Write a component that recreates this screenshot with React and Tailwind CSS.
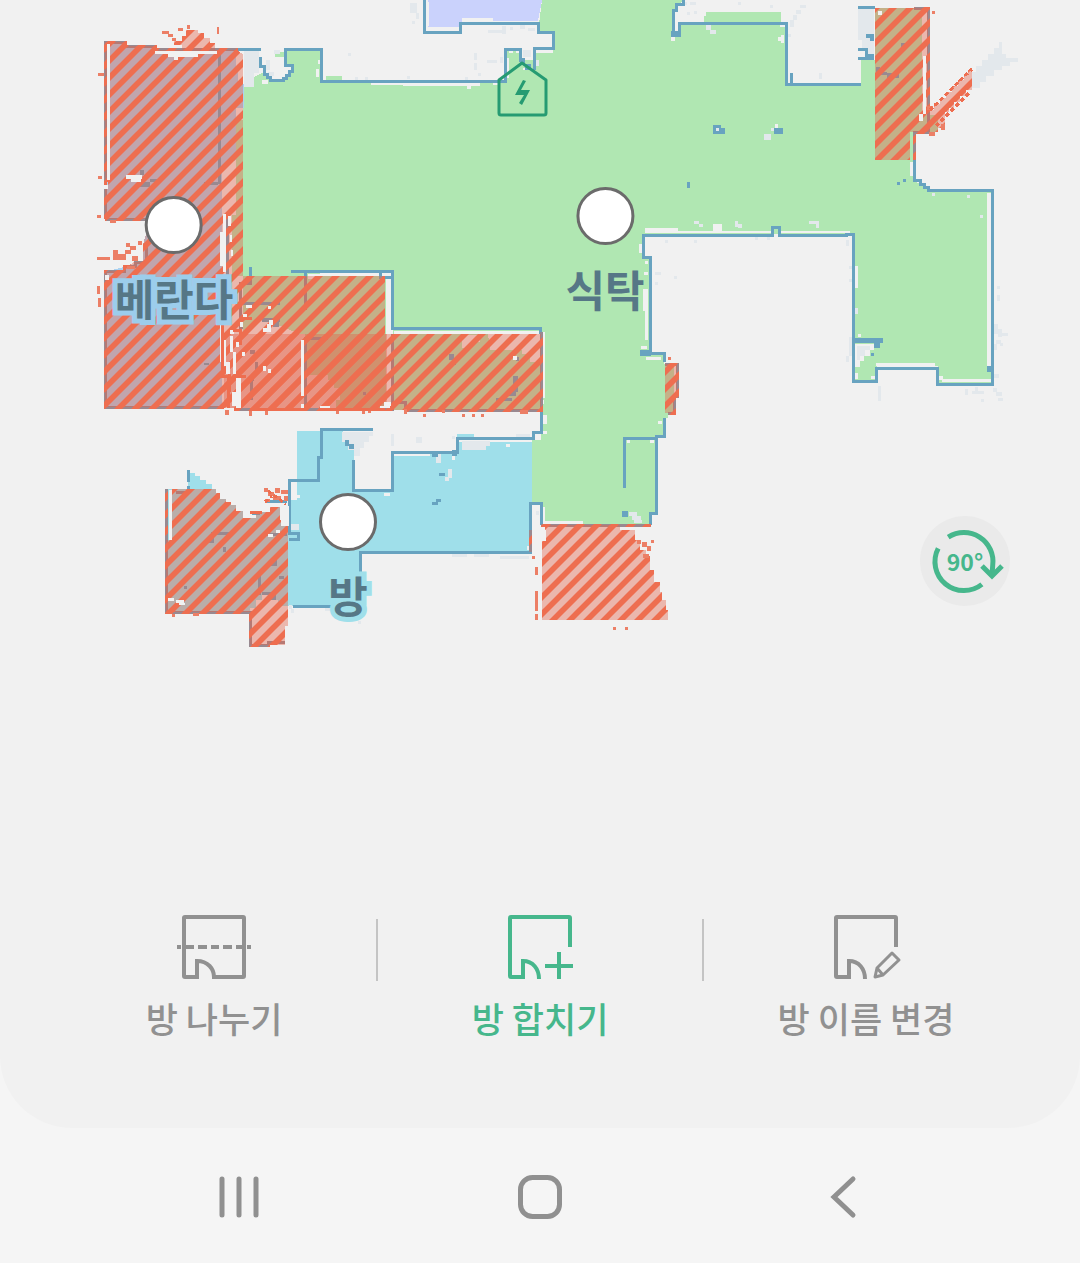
import React, { useState } from "react";

const MAP_WIDTH = 1080;
const MAP_HEIGHT = 880;

const rooms = [
  {
    id: "veranda",
    name: "베란다",
    x: 174,
    y: 225,
    halo: "[-webkit-text-stroke:10px_#9ccdec] [paint-order:stroke_fill]",
  },
  { id: "dining", name: "식탁", x: 605, y: 216, halo: "" },
  {
    id: "room",
    name: "방",
    x: 348,
    y: 522,
    halo: "[-webkit-text-stroke:10px_#9fdfea] [paint-order:stroke_fill]",
  },
];

// [x, y, width, height] of loose cells the sensor left on the map
const dust = [
  [244, 51, 15, 22], [244, 73, 10, 14], [274, 50, 6, 4], [266, 60, 4, 10], [268, 72, 6, 4], [348, 53, 3, 3],
  [355, 77, 3, 3], [365, 77, 3, 3], [407, 76, 3, 3], [465, 77, 3, 3], [410, 3, 7, 10], [416, 13, 3, 6],
  [412, 21, 3, 3], [488, 30, 15, 3], [502, 26, 4, 8], [510, 27, 3, 3], [520, 24, 5, 5], [528, 28, 7, 3],
  [474, 53, 3, 7], [474, 63, 3, 7], [487, 60, 10, 3], [500, 57, 3, 6], [478, 73, 3, 3], [523, 50, 8, 7],
  [536, 60, 3, 6], [684, 2, 3, 3], [690, 2, 6, 3], [687, 12, 3, 3], [694, 11, 3, 3], [738, 2, 3, 3],
  [770, 5, 3, 3], [800, 5, 6, 3], [796, 10, 5, 4], [793, 15, 4, 5], [790, 20, 4, 7], [788, 34, 3, 3],
  [819, 73, 3, 6], [858, 8, 16, 32], [862, 40, 12, 8], [868, 48, 6, 12], [665, 240, 3, 3], [694, 240, 3, 3],
  [755, 237, 3, 3], [767, 237, 3, 3], [655, 272, 6, 3], [674, 276, 3, 3], [655, 282, 3, 3], [846, 240, 3, 6],
  [849, 266, 3, 3], [849, 279, 3, 3], [849, 337, 3, 19], [846, 356, 3, 6], [997, 286, 3, 3], [997, 295, 3, 6],
  [994, 324, 4, 10], [998, 329, 4, 8], [1002, 333, 6, 3], [996, 340, 5, 4], [993, 344, 4, 6], [1000, 343, 3, 3],
  [878, 386, 3, 15], [965, 389, 3, 6], [972, 391, 12, 3], [975, 387, 3, 4], [981, 399, 3, 3], [993, 374, 6, 4],
  [993, 388, 4, 4], [996, 392, 6, 4], [998, 398, 5, 3], [391, 434, 3, 12], [416, 437, 6, 6], [452, 436, 3, 3],
  [516, 434, 14, 3], [452, 554, 15, 3], [474, 554, 15, 3], [500, 556, 29, 3], [536, 511, 3, 4], [325, 608, 5, 3],
  [358, 621, 3, 3], [291, 609, 3, 4],
];

// Unscanned holes inside the rooms
const holes = [
  [371, 83, 32, 2], [403, 83, 77, 3], [467, 86, 4, 3], [493, 82, 5, 3], [505, 58, 4, 20], [509, 50, 4, 3],
  [516, 50, 3, 3], [523, 68, 4, 2], [535, 50, 18, 3], [316, 69, 3, 8], [318, 60, 2, 4], [262, 80, 6, 4],
  [671, 37, 4, 4], [780, 24, 5, 3], [778, 37, 6, 4], [781, 35, 3, 8], [775, 124, 3, 4],
  [645, 228, 33, 5], [678, 231, 94, 2], [780, 231, 70, 2], [713, 224, 9, 8],
  [910, 162, 3, 14], [987, 193, 4, 178],
  [855, 266, 3, 22], [858, 334, 3, 3], [876, 363, 12, 3], [880, 363, 55, 3], [939, 376, 4, 4],
  [942, 379, 49, 3], [855, 344, 19, 6], [855, 350, 15, 6], [855, 356, 9, 5], [855, 361, 5, 6], [855, 373, 3, 6],
  [871, 376, 4, 3], [639, 244, 3, 9], [645, 261, 3, 3], [644, 272, 4, 3], [643, 289, 5, 22], [645, 311, 3, 29],
  [641, 346, 6, 3], [646, 357, 15, 3], [541, 332, 4, 66], [541, 400, 3, 4], [541, 415, 6, 9], [541, 431, 6, 3],
  [658, 421, 4, 3], [627, 440, 3, 3], [650, 440, 4, 3], [541, 507, 4, 17], [545, 521, 38, 3],
  [387, 274, 4, 52], [308, 274, 12, 5], [320, 273, 66, 3], [394, 331, 145, 3],
  [506, 444, 4, 3], [393, 454, 33, 2], [452, 456, 3, 4],
  [384, 493, 6, 3], [527, 546, 3, 4], [291, 482, 6, 18], [297, 495, 3, 3], [427, 2, 2, 24],
];

// Same holes, but seen faintly by the sensor
const faintHoles = [
  [771, 128, 3, 3], [694, 221, 5, 3], [699, 224, 4, 3], [735, 221, 3, 6], [738, 224, 4, 4], [809, 221, 10, 3],
  [816, 224, 3, 4], [764, 134, 7, 6], [706, 25, 5, 5], [710, 30, 6, 4], [932, 193, 3, 3], [967, 195, 3, 3],
  [980, 215, 3, 3], [855, 308, 3, 6], [629, 512, 8, 4], [632, 516, 9, 4], [634, 520, 8, 3], [462, 441, 28, 5],
  [462, 446, 24, 4], [436, 454, 5, 9], [448, 469, 4, 9], [445, 477, 4, 4], [291, 524, 8, 6], [289, 605, 3, 4],
];

const specks = [
  [713, 125, 8, 9], [721, 128, 4, 6], [774, 128, 9, 6], [687, 182, 3, 6], [897, 182, 3, 3], [903, 179, 3, 3],
  [622, 511, 6, 6], [640, 350, 11, 6], [855, 338, 28, 5], [874, 343, 6, 5], [871, 353, 3, 3], [987, 366, 5, 6],
  [432, 453, 6, 4], [452, 450, 5, 6], [439, 473, 6, 3], [436, 499, 5, 3], [432, 502, 6, 3], [345, 440, 4, 6],
  [349, 444, 5, 5], [671, 31, 8, 6], [790, 73, 3, 10], [866, 34, 8, 4], [870, 38, 4, 3], [866, 54, 8, 6],
  [520, 58, 5, 6], [525, 64, 6, 6], [187, 470, 3, 12],
];

// Walls and marks that sit below the no-go layer
const coveredSpecks = [
  [140, 170, 4, 5], [138, 182, 12, 5], [150, 179, 8, 3], [204, 182, 14, 3], [218, 50, 3, 134], [226, 215, 3, 60],
  [262, 318, 18, 4], [273, 322, 6, 5], [240, 302, 40, 3], [304, 337, 3, 72], [304, 337, 24, 3], [204, 363, 5, 2],
  [240, 320, 3, 9], [222, 232, 6, 3], [449, 354, 5, 6], [452, 359, 4, 6], [513, 376, 5, 16], [508, 392, 8, 4],
  [496, 398, 16, 3], [516, 357, 3, 4], [901, 43, 4, 7], [876, 67, 4, 7], [880, 72, 7, 3], [887, 73, 12, 5],
  [211, 532, 18, 3], [209, 538, 5, 5], [223, 547, 3, 5], [258, 571, 3, 24], [262, 592, 9, 3], [270, 595, 6, 5],
  [271, 560, 6, 6], [184, 586, 3, 3], [279, 576, 5, 3], [265, 533, 22, 3], [267, 500, 20, 3], [252, 512, 8, 3],
  [187, 486, 3, 6], [250, 350, 5, 4], [255, 362, 3, 10], [248, 378, 6, 3], [363, 392, 3, 3], [250, 380, 3, 20],
];

const coveredHoles = [
  [107, 44, 3, 136], [155, 51, 62, 3], [168, 54, 30, 3], [174, 57, 4, 3], [126, 175, 16, 4], [131, 179, 10, 3],
  [104, 185, 4, 4], [223, 214, 3, 58], [220, 232, 3, 34], [228, 216, 3, 10], [230, 235, 2, 7], [231, 250, 2, 6],
  [220, 322, 3, 40], [223, 340, 3, 26], [226, 362, 4, 12], [230, 336, 3, 16], [233, 352, 3, 22], [236, 378, 5, 30],
  [232, 392, 4, 14], [230, 330, 4, 4], [246, 305, 6, 3], [243, 314, 4, 4], [240, 322, 3, 5], [236, 342, 3, 5],
  [301, 340, 3, 56], [263, 328, 8, 4], [267, 324, 4, 6], [269, 320, 4, 5], [242, 352, 3, 4], [263, 366, 3, 5],
  [268, 369, 3, 4], [384, 402, 7, 4], [380, 406, 10, 2], [320, 406, 10, 3], [301, 404, 3, 6], [513, 356, 4, 4],
  [923, 56, 3, 58], [919, 114, 4, 7], [878, 11, 4, 4], [169, 490, 3, 50], [168, 598, 6, 3], [176, 600, 8, 3],
  [179, 603, 6, 2], [281, 506, 8, 20], [268, 534, 5, 3], [276, 530, 4, 3], [268, 306, 3, 3], [105, 275, 4, 5],
];

const debris = [
  [162, 31, 7, 3], [168, 34, 5, 3], [172, 38, 4, 3], [178, 28, 5, 3], [187, 25, 3, 4], [217, 27, 2, 7],
  [98, 73, 6, 3], [98, 176, 4, 3], [97, 215, 4, 3], [97, 257, 13, 3], [113, 250, 5, 10], [118, 254, 8, 6],
  [125, 250, 6, 4], [130, 246, 6, 4], [126, 243, 4, 4], [138, 241, 4, 4], [132, 256, 6, 5], [127, 266, 8, 3],
  [110, 220, 6, 3], [97, 286, 3, 8], [98, 298, 3, 9], [225, 410, 4, 5], [249, 411, 3, 5], [265, 410, 3, 5],
  [336, 410, 3, 4], [362, 410, 3, 4], [368, 410, 3, 3], [404, 409, 3, 5], [423, 414, 3, 3], [442, 410, 3, 3],
  [462, 414, 3, 3], [472, 414, 3, 3], [481, 414, 3, 3], [520, 410, 8, 4], [668, 357, 3, 3],
  [932, 11, 3, 3], [535, 567, 3, 8], [535, 591, 3, 20], [535, 614, 3, 6], [532, 556, 3, 3], [613, 627, 3, 3],
  [625, 627, 3, 3], [637, 540, 4, 4], [642, 542, 5, 5], [651, 540, 3, 3], [647, 546, 4, 5], [643, 554, 6, 4],
  [172, 614, 3, 3], [193, 613, 6, 3], [264, 488, 4, 4], [268, 492, 6, 4], [275, 488, 5, 5], [281, 490, 7, 4],
  [273, 496, 8, 4], [265, 499, 5, 3], [284, 496, 4, 5], [929, 132, 6, 4], [941, 124, 4, 6], [927, 106, 6, 4],
];

const wallPaths = [
  "M424 0V32H460V23H538V32H553V48H534V70",
  "M520 62V49H505V81H321V49H285V65H292V71H289V75H286V78H283V80H270V77H267V74H264V66H260V57",
  "M238 49H261",
  "M683 0V4H676V10H673V35H679V23H786V84H861",
  "M858 7H875",
  "M858 49H866V58H858",
  "M914 160V180H920V184H924V187H928V190H992V384H937V368H876V381H853V234H846V235H779V227H772V235H643V257H650V353H664V362",
  "M664 418V436H656V513H650V525",
  "M624 488V438H656",
  "M541 525V503H530V552H360V574",
  "M291 271H392V328H540V334",
  "M305 271V277M380 271V277H391",
  "M541 412V432H533V438H457V452H392V490H353V460",
  "M373 429H321V457H318V480H289V533H298V539H289",
  "M293 606H334",
  "M250 267V277",
];

const coveredWallPaths = [
  "M105 219V42H125V46H155V49H238",
  "M105 219H146",
  "M146 245V262H135V266H124V271H105V407H224",
  "M234 409H392V334",
  "M392 402H405V410H541V332",
  "M305 277V310",
  "M250 277V283H240V330",
  "M914 8H928V132H914V160",
  "M665 364H677V396H674V413H668",
  "M166 489V612H250V645H268V642H285",
  "M530 530V552",
  "M541 525H651",
  "M188 492H176",
];

// Each no-go zone carries the tint; overlapping ones get darker
const zones = [
  "M105 42H125V46H156V50H236L243 54V276H385V334H387V408H232L224 407H105V272L122 270L134 262H143V245L150 219H105V189H108V182H105Z",
  "M224 334H393V334H541V410H393V408H224Z",
  "M875 8H928V110H934V104H940V98H946V92H952V86H958V80H964V74H968V70H972V90H966V96H960V102H954V108H949V112H945V128H938V132H910V160H875Z",
  "M665 364H677V397H674V413H665Z",
  "M172 489H216V493H220V499H226V502H231V505H236V511H243V518H256V512H270V507H280V520H288V626H285V645H250V612H166V540H172Z",
  "M545 525H620V530H635V540H640V550H646V556H650V570H654V582H660V592H662V600H666V610H668V620H542V541H546V535Z",
  "M182 50V45H174V41H182V36H186V30H198V33H204V38H210V43H215V50Z",
];

const Cells = ({ cells, fill }) => (
  <g fill={fill}>
    {cells.map(([x, y, width, height], index) => (
      <rect key={index} x={x} y={y} width={width} height={height} />
    ))}
  </g>
);

const FloorPlan = () => (
  <svg
    viewBox={`0 0 ${MAP_WIDTH} ${MAP_HEIGHT}`}
    className="block w-full"
    shapeRendering="crispEdges"
    aria-hidden="true"
  >
    <defs>
      <pattern id="stripes" width="17" height="17" patternUnits="userSpaceOnUse">
        <path d="M0 0H4L0 4ZM13 0H17V4L4 17H0V13ZM17 13V17H13Z" fill="#ee6e50" shapeRendering="auto" />
      </pattern>
    </defs>

    {/* Rooms */}
    <path d="M428 0H542L538 21H493V18H462V23H460V27H428Z" fill="#cad2fc" />
    <path
      fill="#b0e7b2"
      d="M542 0H683L673 12V35H679V25H786V84H861V60H875V8H922V115H938V132H914V180L928 190H991V383H938V366H877V380H854V234H643V257H649V353H664V364H674V413H668V418H663V436H656V513H650V525H541V504H532V440H541V329H392V272H243V87H250L254 77L262 73L270 80H283L292 71V65H285V50H320V82H505V49H520V60H534V49H553V32H538Z"
    />
    <path d="M706 12H781V22H704V16H706ZM275 52H285V57H275ZM326 76H342V80H326ZM236 120H244V276H232V215H236ZM243 272H386V410H243ZM393 330H541V410H393Z" fill="#b0e7b2" />
    <path d="M105 42H125V46H155V50H238L244 87V108H236V160L222 166V407H105V272L143 262V245L150 219H105Z" fill="#aad2f1" />
    <path d="M297 431H343V438H350V445H354V490H392V456H430V452H457V442H532V504H529V551H360V606H288V480H297ZM457 434H474V438H457Z" fill="#9fdfea" />
    <path d="M188 473H195V476H200V480H206V484H212V490H188Z" fill="#9fdfea" />
    <path d="M166 489H216V493H220V499H226V502H231V505H236V511H243V518H256V512H270V507H280V520H288V612H166Z" fill="#9fdfea" />
    <path d="M225 334H240L262 318L285 328L300 334H305V375H328V380H334V388H340V400H336V408H225Z" fill="#f1f1f1" />
    <path d="M488 334H541V362H530V354H522V350H490ZM462 335H480V342H472V348H462ZM222 166H233V215H222ZM236 54H243V84H238V70H236ZM250 612V608H256V600H262V595H270V600H278V606H288V645H250ZM236 276H243V334H222V276ZM922 8H927V110H922Z" fill="#f1f1f1" />

    <Cells cells={dust} fill="#e3e8ec" />
    <path d="M342 432H373V436H369V442H364V448H360V456H354V450H348V442H342ZM972 72H976V66H982V60H988V54H994V48H999V42H1002V54H1006V58H1018V62H1010V66H1002V70H994V76H986V82H980V88H972Z" fill="#e3e8ec" />
    <Cells cells={holes} fill="#f1f1f1" />
    <Cells cells={faintHoles} fill="#e3e8ec" />
    <path d="M857 346H870V350H865V356H860V360H857Z" fill="#e3e8ec" />
    <Cells cells={specks} fill="#68a3c0" />
    <rect x="716" y="128" width="3" height="3" fill="#e3e8ec" />
    <Cells cells={coveredSpecks} fill="#68a3c0" />

    <g fill="none" stroke="#68a3c0" strokeWidth="3">
      {[...wallPaths, ...coveredWallPaths].map((path) => (
        <path key={path} d={path} />
      ))}
    </g>

    {/* No-go zones */}
    <g fill="#e46249" fillOpacity="0.4">
      {zones.map((path) => (
        <path key={path} d={path} />
      ))}
    </g>
    <g fill="none" stroke="#e46249" strokeOpacity="0.4" strokeWidth="3">
      {coveredWallPaths.map((path) => (
        <path key={path} d={path} />
      ))}
    </g>
    <g fill="url(#stripes)">
      {zones.map((path) => (
        <path key={path} d={path} />
      ))}
    </g>
    <g fill="none" stroke="url(#stripes)" strokeWidth="3">
      {coveredWallPaths.map((path) => (
        <path key={path} d={path} />
      ))}
    </g>
    <Cells cells={coveredHoles} fill="#f1f1f1" />
    <Cells cells={debris} fill="#ec7f66" />
    <g fill="none" stroke="#ee6e50" strokeWidth="3">
      <path d="M222 322V376H228V408M233 330H240V345M229 374V392M240 318H252M236 376H246M250 409H305M320 409H385M250 512H262" />
      <path d="M930 110L972 69M936 126L970 92" strokeDasharray="4 3" />
      <path d="M268 491L286 504M265 502L272 496" strokeDasharray="4 3" />
    </g>

    {/* Charging dock */}
    <g shapeRendering="auto">
      <path
        d="M522 63L546 80V113Q546 115 544 115H501Q499 115 499 113V80Z"
        fill="none"
        stroke="#269b72"
        strokeWidth="3"
        strokeLinejoin="round"
      />
      <path d="M523 80L526 81L521 90H530L522 105L519 103L524 95H515Z" fill="#269b72" />
    </g>
  </svg>
);

const RoomMarker = ({ room, selected, onSelect }) => (
  <button
    type="button"
    aria-pressed={selected}
    onClick={onSelect}
    className="absolute -mt-[29px] flex -translate-x-1/2 cursor-pointer flex-col items-center gap-3"
    style={{
      left: `${(room.x / MAP_WIDTH) * 100}%`,
      top: `${(room.y / MAP_HEIGHT) * 100}%`,
    }}
  >
    <span
      className={`size-[58px] rounded-full border-3 border-[#6b6b6b] ${selected ? "bg-[#46b78c]" : "bg-white"}`}
    />
    <span className={`text-[43px] leading-[62px] font-bold whitespace-nowrap text-[#567786] ${room.halo}`}>
      {room.name}
    </span>
  </button>
);

const RotateButton = () => (
  <button
    type="button"
    className="absolute top-[516px] right-[70px] flex size-[90px] items-center justify-center rounded-full bg-[#eaeaea] text-[#46b78c]"
  >
    <svg viewBox="0 0 90 90" className="absolute inset-0" fill="none" stroke="currentColor" strokeWidth="5" aria-hidden="true">
      <path d="M28.200 21.200A29 29 0 0 1 72.700 49.500L72 59" />
      <path d="M18.200 32.300A29 29 0 0 0 61.900 68.400" />
      <path d="M62 50L72 60L82 50" />
    </svg>
    <span className="relative text-[23px] font-bold">90°</span>
  </button>
);

const SplitIcon = () => (
  <svg viewBox="0 0 80 64" className="h-16 w-20" fill="none" stroke="currentColor" strokeWidth="4" aria-hidden="true">
    <path d="M18 62H11Q10 62 10 61V3Q10 2 11 2H69Q70 2 70 3V61Q70 62 69 62H40C40 54 34 46 23 46V62H18" />
    <path d="M3 32H7M12 32H20M24 32H33M37 32H45M49 32H58M62 32H68M73 32H77" />
  </svg>
);

const MergeIcon = () => (
  <svg viewBox="0 0 80 64" className="h-16 w-20" fill="none" stroke="currentColor" strokeWidth="4" aria-hidden="true">
    <path d="M70 32V3Q70 2 69 2H11Q10 2 10 3V61Q10 62 11 62H23V46C33 46 39 54 39 64" />
    <path d="M59 37V65M45 51H73" />
  </svg>
);

const RenameIcon = () => (
  <svg viewBox="0 0 80 64" className="h-16 w-20" fill="none" stroke="currentColor" strokeWidth="4" aria-hidden="true">
    <path d="M70 32V3Q70 2 69 2H11Q10 2 10 3V61Q10 62 11 62H23V46C33 46 39 54 39 64" />
    <path d="M49 62L51 53L66 38L73 45L57 60ZM51 53L57 60" strokeWidth="3" strokeLinejoin="round" />
  </svg>
);

const tools = [
  { id: "split", label: "방 나누기", icon: SplitIcon },
  { id: "merge", label: "방 합치기", icon: MergeIcon },
  { id: "rename", label: "방 이름 변경", icon: RenameIcon },
];

export default function App() {
  const [activeTool, setActiveTool] = useState("merge");
  const [selectedRooms, setSelectedRooms] = useState([]);

  const toggleRoom = (id) => {
    setSelectedRooms((current) =>
      current.includes(id) ? current.filter((room) => room !== id) : [...current, id]
    );
  };

  return (
    <div className="flex min-h-screen flex-col bg-[#f5f5f5] font-['Noto_Sans_CJK_KR',sans-serif]">
      <main className="rounded-b-[72px] bg-[#f1f1f1] pb-[86px]">
        <section className="relative">
          <FloorPlan />
          {rooms.map((room) => (
            <RoomMarker
              key={room.id}
              room={room}
              selected={selectedRooms.includes(room.id)}
              onSelect={() => toggleRoom(room.id)}
            />
          ))}
          <RotateButton />
        </section>

        <div className="flex px-13 pt-[35px]">
          {tools.map((tool, index) => (
            <React.Fragment key={tool.id}>
              {index > 0 && <div className="mt-1 h-[62px] w-0.5 bg-[#c4c4c4]" />}
              <button
                type="button"
                aria-pressed={activeTool === tool.id}
                onClick={() => setActiveTool(tool.id)}
                className={`flex flex-1 flex-col items-center gap-[15px] ${
                  activeTool === tool.id ? "text-[#46b78c]" : "text-[#919191]"
                }`}
              >
                <tool.icon />
                <span className="text-[35px] leading-[48px] font-medium whitespace-nowrap">{tool.label}</span>
              </button>
            </React.Fragment>
          ))}
        </div>
      </main>

      <nav className="flex flex-1 items-center px-22 pt-11 pb-[42px] text-[#909090]">
        <button type="button" aria-label="최근 앱" className="flex flex-1 justify-center">
          <svg viewBox="0 0 48 48" className="size-12" stroke="currentColor" strokeWidth="5" strokeLinecap="round" aria-hidden="true">
            <path d="M7 6V42M24 6V42M41 6V42" />
          </svg>
        </button>
        <button type="button" aria-label="홈" className="flex flex-1 justify-center">
          <svg viewBox="0 0 48 48" className="size-12" fill="none" stroke="currentColor" strokeWidth="5" aria-hidden="true">
            <rect x="4.500" y="4.500" width="39" height="39" rx="12" />
          </svg>
        </button>
        <button type="button" aria-label="뒤로" className="flex flex-1 justify-center">
          <svg viewBox="0 0 48 48" className="size-12" fill="none" stroke="currentColor" strokeWidth="5" strokeLinecap="round" aria-hidden="true">
            <path d="M36 6L17 24L36 42" />
          </svg>
        </button>
      </nav>
    </div>
  );
}
